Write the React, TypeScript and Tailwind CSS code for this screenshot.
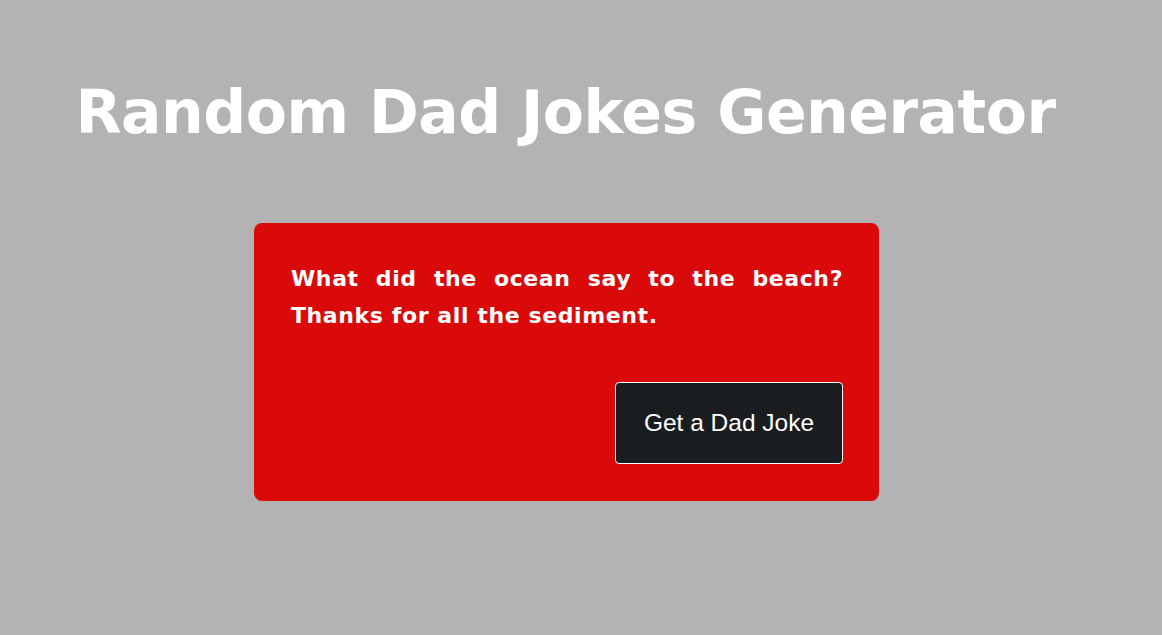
export default function App() {
  return (
    <div className="min-h-screen w-full bg-[#b3b3b3] pr-[29px] flex flex-col items-center" style={{ minHeight: 635 }}>
      <h1 className="mt-[74px] -ml-[2px] text-white font-bold text-[60px] leading-[76px] tracking-[-0.5px] font-['DejaVu_Sans',sans-serif] whitespace-nowrap">
        Random Dad Jokes Generator
      </h1>
      <div className="mt-[73px] w-[625px] h-[278px] bg-[#db0a0a] rounded-lg pl-[37px] pr-[36px] pt-[37px] pb-[37px] flex flex-col">
        <p className="text-white font-bold text-[22px] leading-[37px] tracking-[0.6px] text-justify font-['DejaVu_Sans',sans-serif]">
          What did the ocean say to the beach? Thanks for all the sediment.
        </p>
        <div className="mt-auto flex justify-end">
          <button className="w-[228px] h-[82px] bg-[#1a1d1f] border border-white rounded text-white text-[24.5px] font-['Liberation_Sans',Arial,sans-serif]">
            Get a Dad Joke
          </button>
        </div>
      </div>
    </div>
  );
}
